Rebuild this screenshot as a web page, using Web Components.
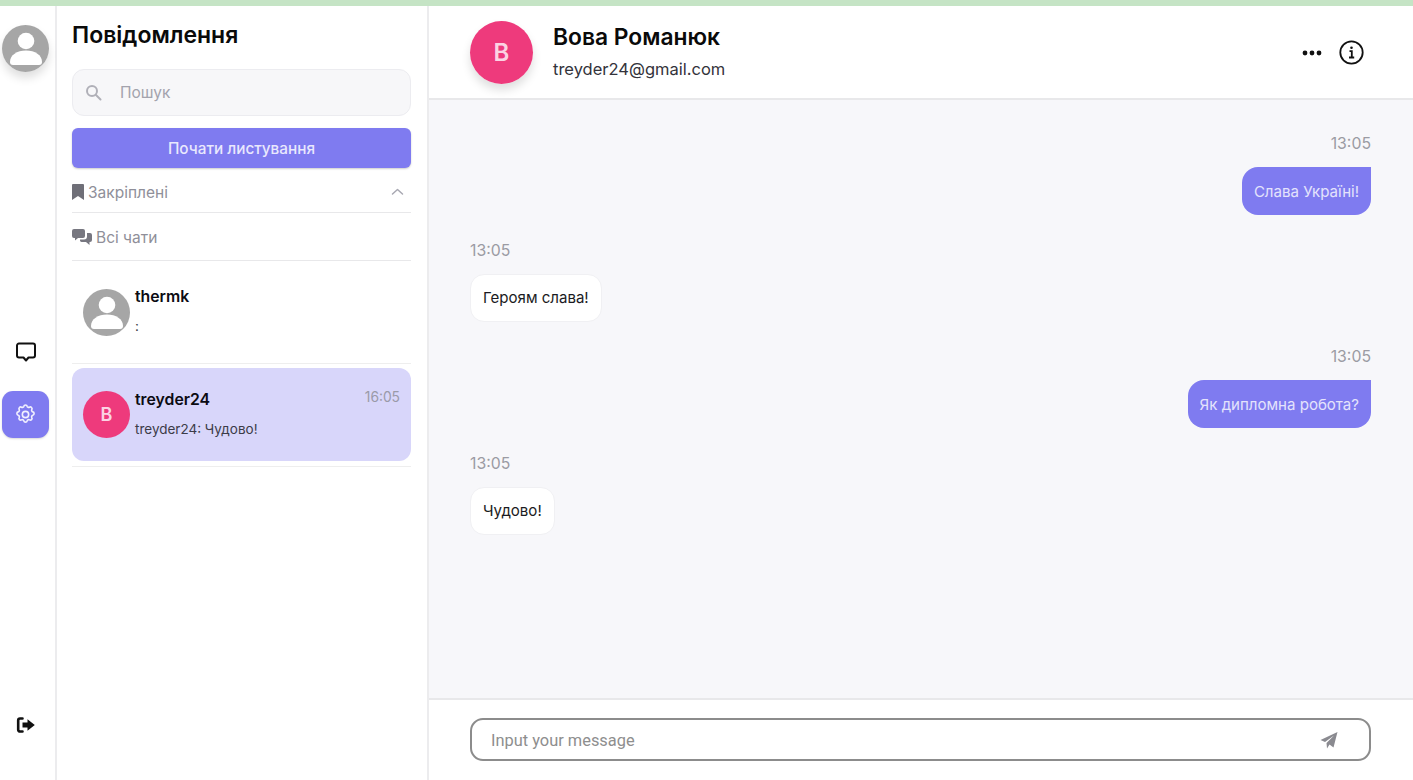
<!DOCTYPE html>
<html lang="uk">
<head>
<meta charset="utf-8">
<title>Повідомлення</title>
<style>
html, body { margin: 0; height: 100%; }
body { font-family: Inter, "Liberation Sans", sans-serif; background: #fff; overflow: hidden; }
</style>
</head>
<body>
<chat-app></chat-app>
<script>
const personIcon = `<svg viewBox="0 0 47 47" width="100%" height="100%" style="display:block"><circle cx="23.5" cy="23.5" r="23.5" fill="#a6a6a6"/><circle cx="24" cy="16" r="8.300" fill="#fff"/><path d="M8 37c0-7 7-11.500 16-11.500S40 30 40 37c0 1.800-1 3-3 3H11c-2 0-3-1.200-3-3z" fill="#fff"/></svg>`;

class ChatAvatar extends HTMLElement {
    constructor() {
        super();
        this.attachShadow({ mode: "open" });
    }
    connectedCallback() {
        const size = this.getAttribute("size") || 47;
        const letter = this.getAttribute("letter");
        const fs = this.getAttribute("fs") || 18;
        this.shadowRoot.innerHTML = `
        <style>
            :host { display:block; width:${size}px; height:${size}px; flex:none; border-radius:50%; }
            :host([shadow]) { box-shadow:0 6px 10px rgba(0,0,0,.13); }
            .letter { width:100%; height:100%; border-radius:50%; background:#ee3a7c; color:#fbd3e3;
                display:flex; align-items:center; justify-content:center; font-size:${fs}px; font-weight:600; }
        </style>
        ${letter ? `<div class="letter">${letter}</div>` : personIcon}`;
    }
}
customElements.define("chat-avatar", ChatAvatar);

const railTemplate = document.createElement("template");
railTemplate.innerHTML = `
<style>
    :host { display:flex; flex-direction:column; align-items:center; box-sizing:border-box; width:57px; flex:none;
        border-right:2px solid #ececee; padding:19px 6px 0 2px; }
    .icon { width:47px; height:47px; display:flex; align-items:center; justify-content:center; flex:none; }
    .chat { margin-top:256px; }
    .settings { margin-top:16px; background:#7f7bf0; border-radius:11px; box-shadow:0 1px 2px rgba(0,0,0,.15); }
    .logout { margin-top:263px; }
</style>
<chat-avatar shadow></chat-avatar>
<div class="icon chat">
    <svg width="22" height="22" viewBox="0 0 22 22" fill="none" stroke="#111" stroke-width="2" stroke-linejoin="round"><path d="M4 2.500h14a2 2 0 0 1 2 2v10a2 2 0 0 1-2 2h-4.500l-2.500 3-2.500-3H4a2 2 0 0 1-2-2v-10a2 2 0 0 1 2-2z"/></svg>
</div>
<div class="icon settings">
    <svg width="23" height="23" viewBox="0 0 24 24" fill="none" stroke="#f1f0fe" stroke-width="1.700" stroke-linejoin="round" stroke-linecap="round"><path d="M10.300 2.800c.4-1.700 3-1.700 3.400 0 .3 1.100 1.500 1.600 2.500 1.100 1.500-.9 3.300.9 2.400 2.400-.5 1-.0 2.200 1.100 2.500 1.700.4 1.700 3 0 3.400-1.100.3-1.600 1.500-1.100 2.500.9 1.500-.9 3.300-2.400 2.400-1-.5-2.200 0-2.500 1.100-.4 1.700-3 1.700-3.400 0-.3-1.100-1.500-1.600-2.500-1.100-1.500.9-3.300-.9-2.400-2.400.5-1 0-2.200-1.100-2.500-1.700-.4-1.700-3 0-3.400 1.100-.3 1.600-1.500 1.100-2.500-.9-1.500.9-3.300 2.400-2.400 1 .5 2.200 0 2.500-1.100z" transform="translate(0 0.500)"/><circle cx="12" cy="12" r="3.300"/></svg>
</div>
<div class="icon logout">
    <svg width="20" height="18" viewBox="0 0 20 18" fill="none"><path d="M6.500 2.500H4a1.800 1.800 0 0 0-1.800 1.800v9.400A1.800 1.800 0 0 0 4 15.500h2.500" stroke="#111" stroke-width="2.600" stroke-linecap="round"/><path d="M11.500 3.200 18.800 9l-7.300 5.800v-3.300H6.500v-5h5z" fill="#111"/></svg>
</div>`;
class ChatRail extends HTMLElement {
    constructor() {
        super();
        this.attachShadow({ mode: "open" });
        this.shadowRoot.appendChild(railTemplate.content.cloneNode(true));
    }
}
customElements.define("chat-rail", ChatRail);

const itemTemplate = document.createElement("template");
itemTemplate.innerHTML = `
<style>
    :host { display:flex; box-sizing:border-box; align-items:center; gap:5px; padding:0 11px; border-radius:12px; }
    :host([active]) { background:#d8d6fa; }
    .body { flex:1; min-width:0; display:flex; flex-direction:column; gap:12px; margin-top:-3px; }
    :host([active]) .body { margin-top:-1px; }
    .top { display:flex; justify-content:space-between; align-items:flex-start; }
    .name { font-size:15.800px; font-weight:600; color:#0b0b12; line-height:18px; }
    .time { font-size:13.800px; color:#9a9aa8; line-height:16px; margin-top:-2px; }
    .last { font-size:13.500px; color:#3c3c48; line-height:16px; }
</style>
<slot name="avatar"></slot>
<div class="body">
    <div class="top"><span class="name"><slot name="name"></slot></span><span class="time"><slot name="time"></slot></span></div>
    <div class="last"><slot name="last"></slot></div>
</div>`;
class ChatItem extends HTMLElement {
    constructor() {
        super();
        this.attachShadow({ mode: "open" });
        this.shadowRoot.appendChild(itemTemplate.content.cloneNode(true));
    }
}
customElements.define("chat-item", ChatItem);

const sidebarTemplate = document.createElement("template");
sidebarTemplate.innerHTML = `
<style>
    :host { display:flex; flex-direction:column; box-sizing:border-box; width:372px; flex:none;
        border-right:2px solid #ececee; padding:15px 16px 0 15px; }
    h1 { margin:0; font-size:23px; font-weight:600; line-height:28px; color:#0a0a0a; }
    .search { margin-top:20px; height:47px; box-sizing:border-box; background:#f7f7f9; border:1px solid #ececf0; border-radius:12px;
        display:flex; align-items:center; padding:0 0 0 12px; gap:18px; font-size:15.500px; color:#a3a3ad; }
    .start { margin-top:12px; height:40px; background:#7f7bf0; border-radius:6px; color:#e9e8fd; font-size:15.300px; font-weight:500;
        display:flex; align-items:center; justify-content:center; box-shadow:0 1px 2px rgba(0,0,0,.2); }
    .row { display:flex; align-items:center; box-sizing:border-box; font-size:15.500px; color:#8f8f99; border-bottom:1px solid #e8e8ea; gap:4px; }
    .pinned { height:45px; padding-top:4px; }
    .pinned svg.up { margin-left:auto; margin-right:7px; }
    .all { height:48px; padding-top:1px; }
    .one { height:102px; border-bottom:1px solid #eeeeee; }
    .sep { border-bottom:1px solid #eeeeee; }
    .first ::slotted(chat-item) { height:102px; }
    .second { height:103px; box-sizing:border-box; padding-top:4px; }
    .second ::slotted(chat-item) { height:93px; }
</style>
<h1>Повідомлення</h1>
<div class="search">
    <svg width="17" height="17" viewBox="0 0 17 17" fill="none" stroke="#b0b0b8" stroke-width="2" stroke-linecap="round"><circle cx="7" cy="7" r="5"/><path d="m11 11 4.500 4.500"/></svg>
    <span>Пошук</span>
</div>
<div class="start">Почати листування</div>
<div class="row pinned">
    <svg width="12" height="16" viewBox="0 0 12 16"><path d="M0 1a1 1 0 0 1 1-1h10a1 1 0 0 1 1 1v15l-6-4-6 4z" fill="#6f6f78"/></svg>
    <span>Закріплені</span>
    <svg class="up" width="13" height="8" viewBox="0 0 13 8" fill="none" stroke="#a8a8b2" stroke-width="1.500" stroke-linecap="round" stroke-linejoin="round"><path d="m1.500 6 5-4.500 5 4.500"/></svg>
</div>
<div class="row all">
    <svg width="20" height="16" viewBox="0 0 20 16"><path d="M2 0h9a2 2 0 0 1 2 2v5a2 2 0 0 1-2 2H6l-3 2.500V9H2a2 2 0 0 1-2-2V2a2 2 0 0 1 2-2z" fill="#777780"/><path d="M15 4h3a2 2 0 0 1 2 2v5a2 2 0 0 1-2 2h-.500v3L14 13H9.500a2 2 0 0 1-1.500-2.500h4A3 3 0 0 0 15 7.500z" fill="#777780"/></svg>
    <span>Всі чати</span>
</div>
<div class="first one"><slot name="first"></slot></div>
<div class="sep second"><slot name="second"></slot></div>`;
class ChatSidebar extends HTMLElement {
    constructor() {
        super();
        this.attachShadow({ mode: "open" });
        this.shadowRoot.appendChild(sidebarTemplate.content.cloneNode(true));
    }
}
customElements.define("chat-sidebar", ChatSidebar);

const messageTemplate = document.createElement("template");
messageTemplate.innerHTML = `
<style>
    :host { display:flex; flex-direction:column; align-items:flex-start; gap:13px; }
    :host([mine]) { align-items:flex-end; }
    .time { font-size:15.800px; line-height:20px; color:#9b9ba3; }
    .bubble { box-sizing:border-box; height:48px; display:flex; align-items:center; padding:0 12px; font-size:15.050px;
        background:#fff; color:#1b1b22; border:1px solid #f0f0f3; border-radius:14px; }
    :host([mine]) .bubble { background:#7f7bf0; color:#e4e3fc; border:0; border-radius:16px 0 16px 16px; }
</style>
<span class="time"><slot name="time"></slot></span>
<div class="bubble"><slot></slot></div>`;
class ChatMessage extends HTMLElement {
    constructor() {
        super();
        this.attachShadow({ mode: "open" });
        this.shadowRoot.appendChild(messageTemplate.content.cloneNode(true));
    }
}
customElements.define("chat-message", ChatMessage);

const composerTemplate = document.createElement("template");
composerTemplate.innerHTML = `
<style>
    :host { display:block; flex:none; box-sizing:border-box; height:82px; background:#fff; border-top:2px solid #e8e8ea; padding:18px 42px 0 41px; }
    .box { height:43px; box-sizing:border-box; border:2px solid #8c8c8c; border-radius:13px; display:flex; align-items:center;
        justify-content:space-between; padding:1px 31px 0 19px; font-family:Roboto, sans-serif; font-size:16.400px; color:#8e8e8e; }
</style>
<div class="box">
    <span>Input your message</span>
    <svg width="18" height="17" viewBox="0 0 18 17"><path d="M17.500 0 13.500 15.500 9.500 12.500 7 16.500 6.500 11 14 3.500 5 10 .5 8z" fill="#8a8a90"/></svg>
</div>`;
class ChatComposer extends HTMLElement {
    constructor() {
        super();
        this.attachShadow({ mode: "open" });
        this.shadowRoot.appendChild(composerTemplate.content.cloneNode(true));
    }
}
customElements.define("chat-composer", ChatComposer);

const mainTemplate = document.createElement("template");
mainTemplate.innerHTML = `
<style>
    :host { display:flex; flex-direction:column; flex:1; min-width:0; }
    header { flex:none; box-sizing:border-box; height:94px; border-bottom:2px solid #e8e8ea; display:flex; align-items:center; padding:1px 49px 0 41px; gap:20px; }
    .who { display:flex; flex-direction:column; gap:7px; margin-bottom:2px; }
    .name { font-size:22.800px; font-weight:600; line-height:28px; color:#0a0a0a; }
    .mail { font-size:16.500px; line-height:22px; color:#33333b; }
    .tools { margin-left:auto; display:flex; align-items:center; gap:17px; }
    .messages { flex:1; min-height:0; background:#f7f7fa; display:flex; flex-direction:column; gap:25.500px; padding:34px 42px 0 41px; }
</style>
<header>
    <chat-avatar size="63" fs="24" letter="В" shadow></chat-avatar>
    <div class="who"><span class="name">Вова Романюк</span><span class="mail">treyder24@gmail.com</span></div>
    <div class="tools">
        <svg width="20" height="6" viewBox="0 0 20 6" fill="#111"><circle cx="3" cy="3" r="2.400"/><circle cx="10" cy="3" r="2.400"/><circle cx="17" cy="3" r="2.400"/></svg>
        <svg width="25" height="25" viewBox="0 0 25 25" fill="none" stroke="#111"><circle cx="12.500" cy="12.500" r="11.200" stroke-width="1.800"/><path d="M10.500 11.200h2.300v6M10 17.500h5.200" stroke-width="1.800"/><circle cx="12.500" cy="7.800" r="1.300" fill="#111" stroke="none"/></svg>
    </div>
</header>
<div class="messages"><slot></slot></div>
<chat-composer></chat-composer>`;
class ChatMain extends HTMLElement {
    constructor() {
        super();
        this.attachShadow({ mode: "open" });
        this.shadowRoot.appendChild(mainTemplate.content.cloneNode(true));
    }
}
customElements.define("chat-main", ChatMain);

const appTemplate = document.createElement("template");
appTemplate.innerHTML = `
<style>
    :host { display:flex; flex-direction:column; height:780px; }
    .strip { height:6px; flex:none; background:#c5e4c5; }
    .panes { flex:1; min-height:0; display:flex; }
</style>
<div class="strip"></div>
<div class="panes">
    <chat-rail></chat-rail>
    <chat-sidebar>
        <chat-item slot="first">
            <chat-avatar slot="avatar"></chat-avatar>
            <span slot="name">thermk</span>
            <span slot="last">:</span>
        </chat-item>
        <chat-item slot="second" active>
            <chat-avatar slot="avatar" letter="В"></chat-avatar>
            <span slot="name">treyder24</span>
            <span slot="time">16:05</span>
            <span slot="last">treyder24: Чудово!</span>
        </chat-item>
    </chat-sidebar>
    <chat-main>
        <chat-message mine><span slot="time">13:05</span>Слава Україні!</chat-message>
        <chat-message><span slot="time">13:05</span>Героям слава!</chat-message>
        <chat-message mine><span slot="time">13:05</span>Як дипломна робота?</chat-message>
        <chat-message><span slot="time">13:05</span>Чудово!</chat-message>
    </chat-main>
</div>`;
class ChatApp extends HTMLElement {
    constructor() {
        super();
        this.attachShadow({ mode: "open" });
        this.shadowRoot.appendChild(appTemplate.content.cloneNode(true));
    }
}
customElements.define("chat-app", ChatApp);
</script>
</body>
</html>
